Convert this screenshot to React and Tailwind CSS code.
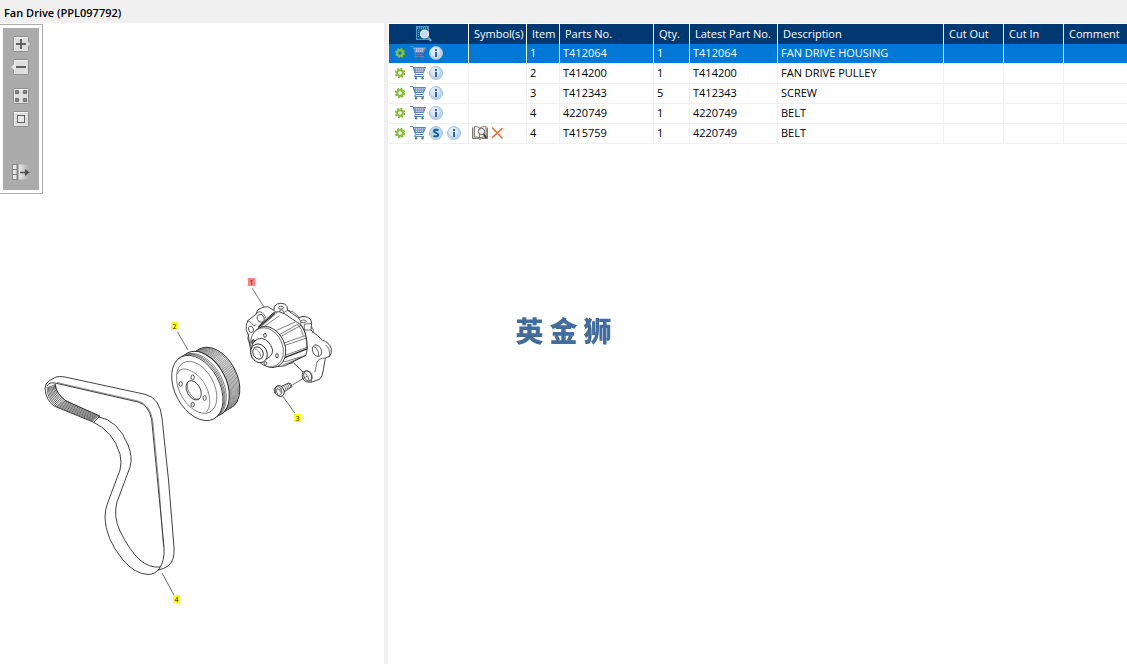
import React, { useState } from 'react';

const columns = [
  { key: 'symbols', label: 'Symbol(s)', width: 'w-[58px]' },
  { key: 'item', label: 'Item', width: 'w-[33px]' },
  { key: 'partNo', label: 'Parts No.', width: 'w-[94px]' },
  { key: 'qty', label: 'Qty.', width: 'w-[36px]' },
  { key: 'latest', label: 'Latest Part No.', width: 'w-[88px]' },
  { key: 'description', label: 'Description', width: 'w-[166px]' },
  { key: 'cutOut', label: 'Cut Out', width: 'w-[60px]' },
  { key: 'cutIn', label: 'Cut In', width: 'w-[60px]' },
  { key: 'comment', label: 'Comment', width: '' },
];

const parts = [
  { item: '1', partNo: 'T412064', qty: '1', latest: 'T412064', description: 'FAN DRIVE HOUSING' },
  { item: '2', partNo: 'T414200', qty: '1', latest: 'T414200', description: 'FAN DRIVE PULLEY' },
  { item: '3', partNo: 'T412343', qty: '5', latest: 'T412343', description: 'SCREW' },
  { item: '4', partNo: '4220749', qty: '1', latest: '4220749', description: 'BELT' },
  { item: '4', partNo: 'T415759', qty: '1', latest: '4220749', description: 'BELT', superseded: true },
];

// Icons
const GearIcon = () => (
  <svg viewBox="0 0 16 16" className="size-4">
    <circle cx="8" cy="8" r="4.4" fill="none" stroke="#7fb02c" strokeWidth="1.6" strokeDasharray="1.8 1.656" />
    <circle cx="8" cy="8" r="2.9" fill="none" stroke="#8bbf35" strokeWidth="2.2" />
  </svg>
);

const CartIcon = () => (
  <svg viewBox="0 0 16 16" className="size-4" fill="none" stroke="#5b84b8">
    <path d="M3.500 2.500H15.500L13.500 7.500H5Z" fill="#c3d2e8" />
    <path d="M5.500 2.500V7.500M7.500 2.500V7.500M9.500 2.500V7.500M11.500 2.500V7.500M13.500 2.500V7.500M4.500 5H14.500" stroke="#6a7fae" strokeWidth=".6" />
    <path d="M0 1.500H3L5.500 9.500L4.500 11.500H14M5.500 9.500H13" strokeWidth="1" />
    <circle cx="6" cy="13.300" r="1.200" fill="#4f6f9f" stroke="none" />
    <circle cx="12.500" cy="13.300" r="1.200" fill="#4f6f9f" stroke="none" />
  </svg>
);

const InfoIcon = () => (
  <svg viewBox="0 0 16 16" className="size-4">
    <circle cx="8" cy="8" r="6.6" fill="#bcd5ea" stroke="#a0c2e0" strokeWidth=".8" />
    <circle cx="7.2" cy="6.8" r="4.6" fill="#dceaf6" />
    <path d="M7 4H9V6H7ZM7 7H9V12H7Z" fill="#35659d" />
  </svg>
);

const SupersedeIcon = () => (
  <svg viewBox="0 0 16 16" className="size-4">
    <circle cx="8" cy="8" r="6.6" fill="#b9d7ea" stroke="#a0c2e0" strokeWidth=".8" />
    <path
      d="M10.4 5.4C9.6 4.5 6 4.2 6 6.2C6 8.2 10.2 7.6 10.2 9.8C10.2 11.8 6.4 11.6 5.5 10.6"
      fill="none"
      stroke="#0f5f94"
      strokeWidth="1.9"
    />
  </svg>
);

const BookSearchIcon = () => (
  <svg viewBox="0 0 16 16" className="size-4" fill="none">
    <path d="M.5 2.500V13.500H6.500L8 14.500L9.500 13.500H15.500V2.500" fill="#c9c6bd" stroke="#7d7a72" />
    <path d="M2.500 1.500Q5 1 7.500 3V13Q5 11.500 2.500 12Z" fill="#fff" stroke="#6d6a62" strokeWidth=".8" />
    <path d="M14 1.500Q10.500 1 7.500 3V13Q10.500 11.500 14 12Z" fill="#f6f4ee" stroke="#6d6a62" strokeWidth=".8" />
    <circle cx="9.5" cy="6.5" r="3.2" fill="#eceded" stroke="#66635c" />
    <path d="M11.500 9L14.500 13" stroke="#3f3d39" strokeWidth="1.9" />
  </svg>
);

const CrossIcon = () => (
  <svg viewBox="0 0 16 16" className="size-4">
    <path d="M2.500 3L12 13M12 3.500L2.500 12.500" stroke="#f26a30" strokeWidth="1.6" strokeLinecap="round" />
  </svg>
);

const PageSearchIcon = () => (
  <svg viewBox="0 0 16 16" className="size-4">
    <rect x=".5" y=".5" width="12" height="13" fill="#0d5b8c" stroke="#4b97c4" />
    <path d="M1 2H13" stroke="#b9dcf0" strokeDasharray="1 1" />
    <path d="M2.500 4V12" stroke="#4a94bf" strokeDasharray="1 1" />
    <circle cx="8.500" cy="8" r="4" fill="#c4dced" stroke="#eaf3f9" strokeWidth="1.2" />
    <path d="M11.500 11L15.300 15" stroke="#6fa2ca" strokeWidth="2.2" />
  </svg>
);

const ToolFace = ({ children, tab }) => (
  <svg viewBox="0 0 16 16" className="size-4 overflow-visible">
    <rect x=".5" y=".5" width="15" height="15" rx="1" fill="#dedede" stroke="#8f8f8f" />
    <path d="M1.500 14.500V1.500H14.500" fill="none" stroke="#f4f4f4" />
    {tab === 'right' && <path d="M15 5.500L17.500 8L15 10.500" fill="#dedede" stroke="#a0a0a0" strokeWidth=".6" />}
    {tab === 'left' && <path d="M1 5.500L-1.500 8L1 10.500" fill="#dedede" stroke="#f0f0f0" strokeWidth=".8" />}
    {children}
  </svg>
);

const IconButton = ({ label, children }) => (
  <button type="button" aria-label={label} className="block size-4 shrink-0">
    {children}
  </button>
);

const Toolbar = () => (
  <div className="w-fit border border-l-0 border-[#ababab] bg-white p-[3px]">
    <div className="flex flex-col items-center bg-[#ababab] px-2.5 pt-2 pb-2.5">
      <div className="flex flex-col gap-[7px]">
        <IconButton label="Zoom in">
          <ToolFace tab="right"><path d="M3 8H13M8 3V13" stroke="#606060" strokeWidth="2" /></ToolFace>
        </IconButton>
        <IconButton label="Zoom out">
          <ToolFace tab="left"><path d="M3 8H13" stroke="#606060" strokeWidth="2" /></ToolFace>
        </IconButton>
      </div>
      <div className="mt-[13px] flex flex-col gap-[7px]">
        <IconButton label="Show all">
          <ToolFace>
            <path d="M2.500 2.500H5.500V5.500H2.500ZM10.500 2.500H13.500V5.500H10.500ZM2.500 10.500H5.500V13.500H2.500ZM10.500 10.500H13.500V13.500H10.500Z" fill="#888" stroke="#6a6a6a" />
          </ToolFace>
        </IconButton>
        <IconButton label="Fit to window">
          <ToolFace><rect x="4.500" y="4.500" width="7" height="7" fill="#e8e8e8" stroke="#606060" /></ToolFace>
        </IconButton>
      </div>
      <div className="mt-[37px]">
        <IconButton label="Detach image">
          <svg viewBox="0 0 16 16" className="size-4 overflow-visible">
            <defs>
              <linearGradient id="fade">
                <stop offset="0" stopColor="#eee" />
                <stop offset="1" stopColor="#ababab" />
              </linearGradient>
            </defs>
            <rect x="5" y=".5" width="11" height="15" fill="url(#fade)" />
            <path d="M-.5 .500H4V5.500H-.5ZM-.5 5.500H4V10.500H-.5ZM-.5 10.500H4V15.500H-.5Z" fill="#e6e6e6" stroke="#808080" strokeWidth=".9" />
            <path d="M5 0V16" stroke="#777" />
            <path d="M7 8.500H15" stroke="#4d4d4d" strokeWidth="1.5" />
            <path d="M12 5L16.500 8.500L12 12Z" fill="#4d4d4d" />
          </svg>
        </IconButton>
      </div>
    </div>
  </div>
);

const Callout = ({ x, y, label, fill }) => (
  <g>
    <rect x={x} y={y} width="7" height="8" fill={fill} />
    <text x={x + 3.5} y={y + 6.500} textAnchor="middle" fontSize="7" fill="#222">{label}</text>
  </g>
);

const Housing = () => (
  <g transform="translate(235 270) scale(.3333)" strokeWidth="2.6">
    {/* mounting flange */}
    <path
      d="M38 152L62 134L68 120Q85 108 98 110Q108 116 117 121L118 109Q126 99 138 100Q152 99 156 110L158 121L190 143Q204 136 218 142Q230 146 230 160L228 180L262 210Q284 218 289 236Q290 252 284 259L271 264L265 300Q262 322 254 328L228 337Q210 338 203 325Q200 312 204 306L175 278L120 290L50 262L40 195Q30 178 34 166Z"
      fill="#fff"
    />
    <path d="M38 152Q52 158 57 168M57 168L64 164M42 190L38 205L46 228M62 134Q66 126 75 125Q91 131 91 145M117 121Q123 130 133 127M133 127L136 120H143L146 128M146 128L158 121M190 143L198 156L196 168L208 180M208 163V180M208 163L230 160M208 180L228 180M232 190L236 181L230 171M271 264Q252 264 246 276L240 306M228 337Q234 324 230 309M204 306Q217 298 228 307M284 259Q286 236 272 225M158 121L176 126L195 145" strokeWidth="2" />
    <g strokeWidth="2.2">
      <ellipse cx="48" cy="178" rx="7" ry="10" transform="rotate(-25 48 178)" />
      <ellipse cx="77" cy="145" rx="10" ry="12" transform="rotate(-20 77 145)" />
      <ellipse cx="138" cy="113" rx="8" ry="4" />
      <ellipse cx="206" cy="154" rx="8" ry="4" />
      <ellipse cx="246" cy="242" rx="13" ry="18" transform="rotate(-25 246 242)" />
      <path d="M237 230Q252 238 251 258" />
      <ellipse cx="218" cy="318" rx="11" ry="16" transform="rotate(-25 218 318)" />
      <path d="M208 308Q221 316 223 333" />
    </g>
    {/* ribbed body */}
    <path d="M70 169L117 127Q132 121 150 132L198 165Q216 185 217 235L213 256L148 288L105 290Z" fill="#fff" />
    <path d="M77 172L125 129M80 175L133 137M128 197L188 163M133 202L198 166M139 222L211 197M141 229L213 205M148 257L216 232M147 276L213 256M143 286L198 262M198 165L210 187L213 205L216 235M188 163Q201 177 205 197M124 181L181 156" strokeWidth="1.8" />
    <path d="M72 171L119 130M149 263L216 237" strokeWidth="4" />
    {/* front face */}
    <ellipse cx="101" cy="231" rx="48" ry="64" transform="rotate(-25 101 231)" fill="#fff" />
    <ellipse cx="96" cy="232" rx="46" ry="61" transform="rotate(-25 96 232)" fill="#fff" strokeWidth="1.8" />
    <ellipse cx="90" cy="196" rx="4" ry="6" />
    <ellipse cx="126" cy="257" rx="4" ry="6" />
    <ellipse cx="55" cy="216" rx="5" ry="7" fill="#777" />
    <ellipse cx="91" cy="280" rx="4" ry="5" />
    {/* hub */}
    <path d="M50 232Q55 206 80 205Q106 212 113 240Q112 262 88 269L74 278Z" fill="#fff" />
    <ellipse cx="72" cy="250" rx="24" ry="29" transform="rotate(-25 72 250)" fill="#fff" />
    <ellipse cx="69" cy="249" rx="15" ry="19" transform="rotate(-25 69 249)" />
    <path d="M59 236Q74 239 78 262" strokeWidth="1.6" />
    {/* screw */}
    <path d="M140 349L161 339Q170 340 171 350L149 365Z" fill="#fff" />
    <path d="M145 347Q152 351 153 361M150 344Q157 348 158 358M155 341Q162 346 163 355M160 340Q167 344 168 352" strokeWidth="2" />
    <ellipse cx="134" cy="363" rx="13" ry="17" transform="rotate(-25 134 363)" fill="#fff" />
    <path d="M121 353L130 350L139 356L141 369L132 377L121 370ZM126 356L134 359L137 368M134 359L139 356M126 356L124 366L130 374M117 359L121 353M117 359L119 369L121 370" fill="#fff" strokeWidth="2" />
    <path d="M172 345L216 319M52 55L86 110M143 378L179 429" strokeWidth="2" />
  </g>
);

const Pulley = () => (
  <g transform="translate(161 315) scale(.3333)" strokeWidth="2.4">
    {[0, 1, 2, 3, 4, 5, 6, 7, 8, 9].map((i) => (
      <ellipse
        key={i}
        cx={163 - i * 3.4}
        cy={190 + i * 2}
        rx="64"
        ry="100"
        transform={`rotate(-28 ${163 - i * 3.4} ${190 + i * 2})`}
        fill="#fff"
        strokeWidth={i ? 1.4 : 3}
      />
    ))}
    <ellipse cx="128" cy="207" rx="67" ry="105" transform="rotate(-28 128 207)" fill="#fff" strokeWidth="3" />
    <ellipse cx="120" cy="212" rx="66" ry="104" transform="rotate(-28 120 212)" fill="#fff" strokeWidth="1.6" />
    <ellipse cx="116" cy="214" rx="66" ry="104" transform="rotate(-28 116 214)" fill="#fff" strokeWidth="1.6" />
    <ellipse cx="112" cy="216" rx="67" ry="105" transform="rotate(-28 112 216)" fill="#fff" strokeWidth="1.6" />
    <ellipse cx="109" cy="219" rx="67" ry="105" transform="rotate(-28 109 219)" fill="#fff" />
    <ellipse cx="107" cy="217" rx="52" ry="84" transform="rotate(-28 107 217)" strokeWidth="1.6" />
    <path d="M49 178Q55 157 79 163Q119 175 140 225Q155 270 136 292" strokeWidth="1.6" />
    <ellipse cx="98" cy="226" rx="20" ry="31" transform="rotate(-28 98 226)" />
    <path d="M81 202Q75 222 90 241Q103 256 113 251" strokeWidth="1.8" />
    <ellipse cx="95" cy="187" rx="5" ry="7" />
    <ellipse cx="59" cy="207" rx="5" ry="7" />
    <ellipse cx="131" cy="249" rx="5" ry="7" />
    <ellipse cx="95" cy="269" rx="5" ry="7" />
    <path d="M49 50L81 105" strokeWidth="2" />
  </g>
);

const Belt = () => (
  <g strokeWidth=".9">
    <path d="M49 381L56 377Q59 376 65 377L145 394.300Q160 398 162 418L168.500 480L174 547Q175 561 168 566Q164 569 158 570" />
    <path d="M47 386Q49 382 55 383L138 402Q149 405 151.700 420L157.500 480L164 547Q165 561 159 569Q156 574 148 574.500Q135 574 123 560Q105 538 105 517Q105 509 108 502L120 470Q122 463 120 454Q113 431 93 422L54 406Q46 400 45 389Q45 383 49 381" />
    <path d="M57 382.500L138 401Q150 404 152.700 420L158.500 480L163.500 547" strokeWidth=".5" />
    <path d="M98 416.700Q118 420 128 445Q133 457 130 467L117 502Q113 516 120 531Q129 550 140 560Q149 568 160 567" />
    <path d="M55 384Q55 392 66 401L100 416L94 422" />
    {/* belt grooves */}
    {[0, 1, 2, 3, 4, 5, 6, 7].map((i) => (
      <path
        key={i}
        d={`M${47 + i * 1.2} ${387 - i * 0.4}Q${47 + i * 1.3} ${399 - i * 0.7} ${56 + i * 1.3} ${406 - i * 0.8}L${93 + i * 0.8} ${421 - i * 0.7}`}
        strokeWidth=".7"
      />
    ))}
    <path d="M162 573L174 595" strokeWidth=".7" />
  </g>
);

const PartsDrawing = () => (
  <svg viewBox="0 194 384 470" className="block w-full font-['Open_Sans',sans-serif]" role="img" aria-label="Fan Drive">
    <g fill="none" stroke="#2b2b2b" strokeLinejoin="round">
      <Housing />
      <Pulley />
      <Belt />
    </g>
    <Callout x={248} y={278} label="1" fill="#ff8080" />
    <Callout x={171} y={322} label="2" fill="#ffff00" />
    <Callout x={294} y={414} label="3" fill="#ffff00" />
    <Callout x={173} y={595} label="4" fill="#ffff00" />
  </svg>
);

const PartsTable = () => {
  const [selected, setSelected] = useState(0);

  return (
    <table className="w-full table-fixed border-separate border-spacing-0 text-[11px] leading-4 whitespace-nowrap">
      <thead>
        <tr className="h-5 bg-[#003972] text-left text-white">
          <th className="w-20 border-r border-white p-0">
            <div className="flex justify-center pr-2.5">
              <IconButton label="Search parts"><PageSearchIcon /></IconButton>
            </div>
          </th>
          {columns.map((col) => (
            <th key={col.key} className={`${col.width} border-r border-white p-0 pl-[5px] font-normal last:border-r-0`}>
              {col.label}
            </th>
          ))}
        </tr>
      </thead>
      <tbody>
        {parts.map((part, i) => (
          <tr
            key={part.partNo}
            onClick={() => setSelected(i)}
            className={i === selected ? 'h-5 bg-[#0078d7] text-white' : 'h-5 bg-white text-black'}
          >
            <td className="border-r border-b border-[#f0f0f0] p-0 pb-0.5">
              <div className="flex gap-0.5 pl-[3px]">
                <IconButton label="Options"><GearIcon /></IconButton>
                <IconButton label="Add to cart"><CartIcon /></IconButton>
                {part.superseded && <IconButton label="Supersession"><SupersedeIcon /></IconButton>}
                <IconButton label="Information"><InfoIcon /></IconButton>
              </div>
            </td>
            {columns.map((col) => (
              <td key={col.key} className="border-r border-b border-[#f0f0f0] p-0 pb-0.5 pl-[3px] last:border-r-0">
                {col.key === 'symbols' && part.superseded ? (
                  <div className="flex gap-0.5">
                    <BookSearchIcon />
                    <CrossIcon />
                  </div>
                ) : (
                  part[col.key]
                )}
              </td>
            ))}
          </tr>
        ))}
      </tbody>
    </table>
  );
};

function App() {
  return (
    <div className="flex min-h-screen flex-col bg-white font-['Open_Sans','Noto_Sans',sans-serif] text-black">
      <header className="bg-[#f0f0f0] px-1 pt-[5px] pb-0.5">
        <h1 className="text-[11px] leading-4 font-semibold">Fan Drive (PPL097792)</h1>
      </header>
      <main className="flex flex-1">
        <section className="w-96 shrink-0 pt-px">
          <Toolbar />
          <PartsDrawing />
        </section>
        <div className="w-1 shrink-0 bg-[#f0f0f0]" />
        <section className="min-w-0 flex-1 pt-px pl-px">
          <PartsTable />
        </section>
      </main>
      {/* Watermark */}
      <div className="pointer-events-none fixed inset-0 flex items-center justify-center gap-1.5 pb-1 font-['Noto_Sans_CJK_SC',sans-serif] text-[28px] leading-8 font-black text-[#426c9c]">
        <span>英</span>
        <span>金</span>
        <span>狮</span>
      </div>
    </div>
  );
}

export default App;
